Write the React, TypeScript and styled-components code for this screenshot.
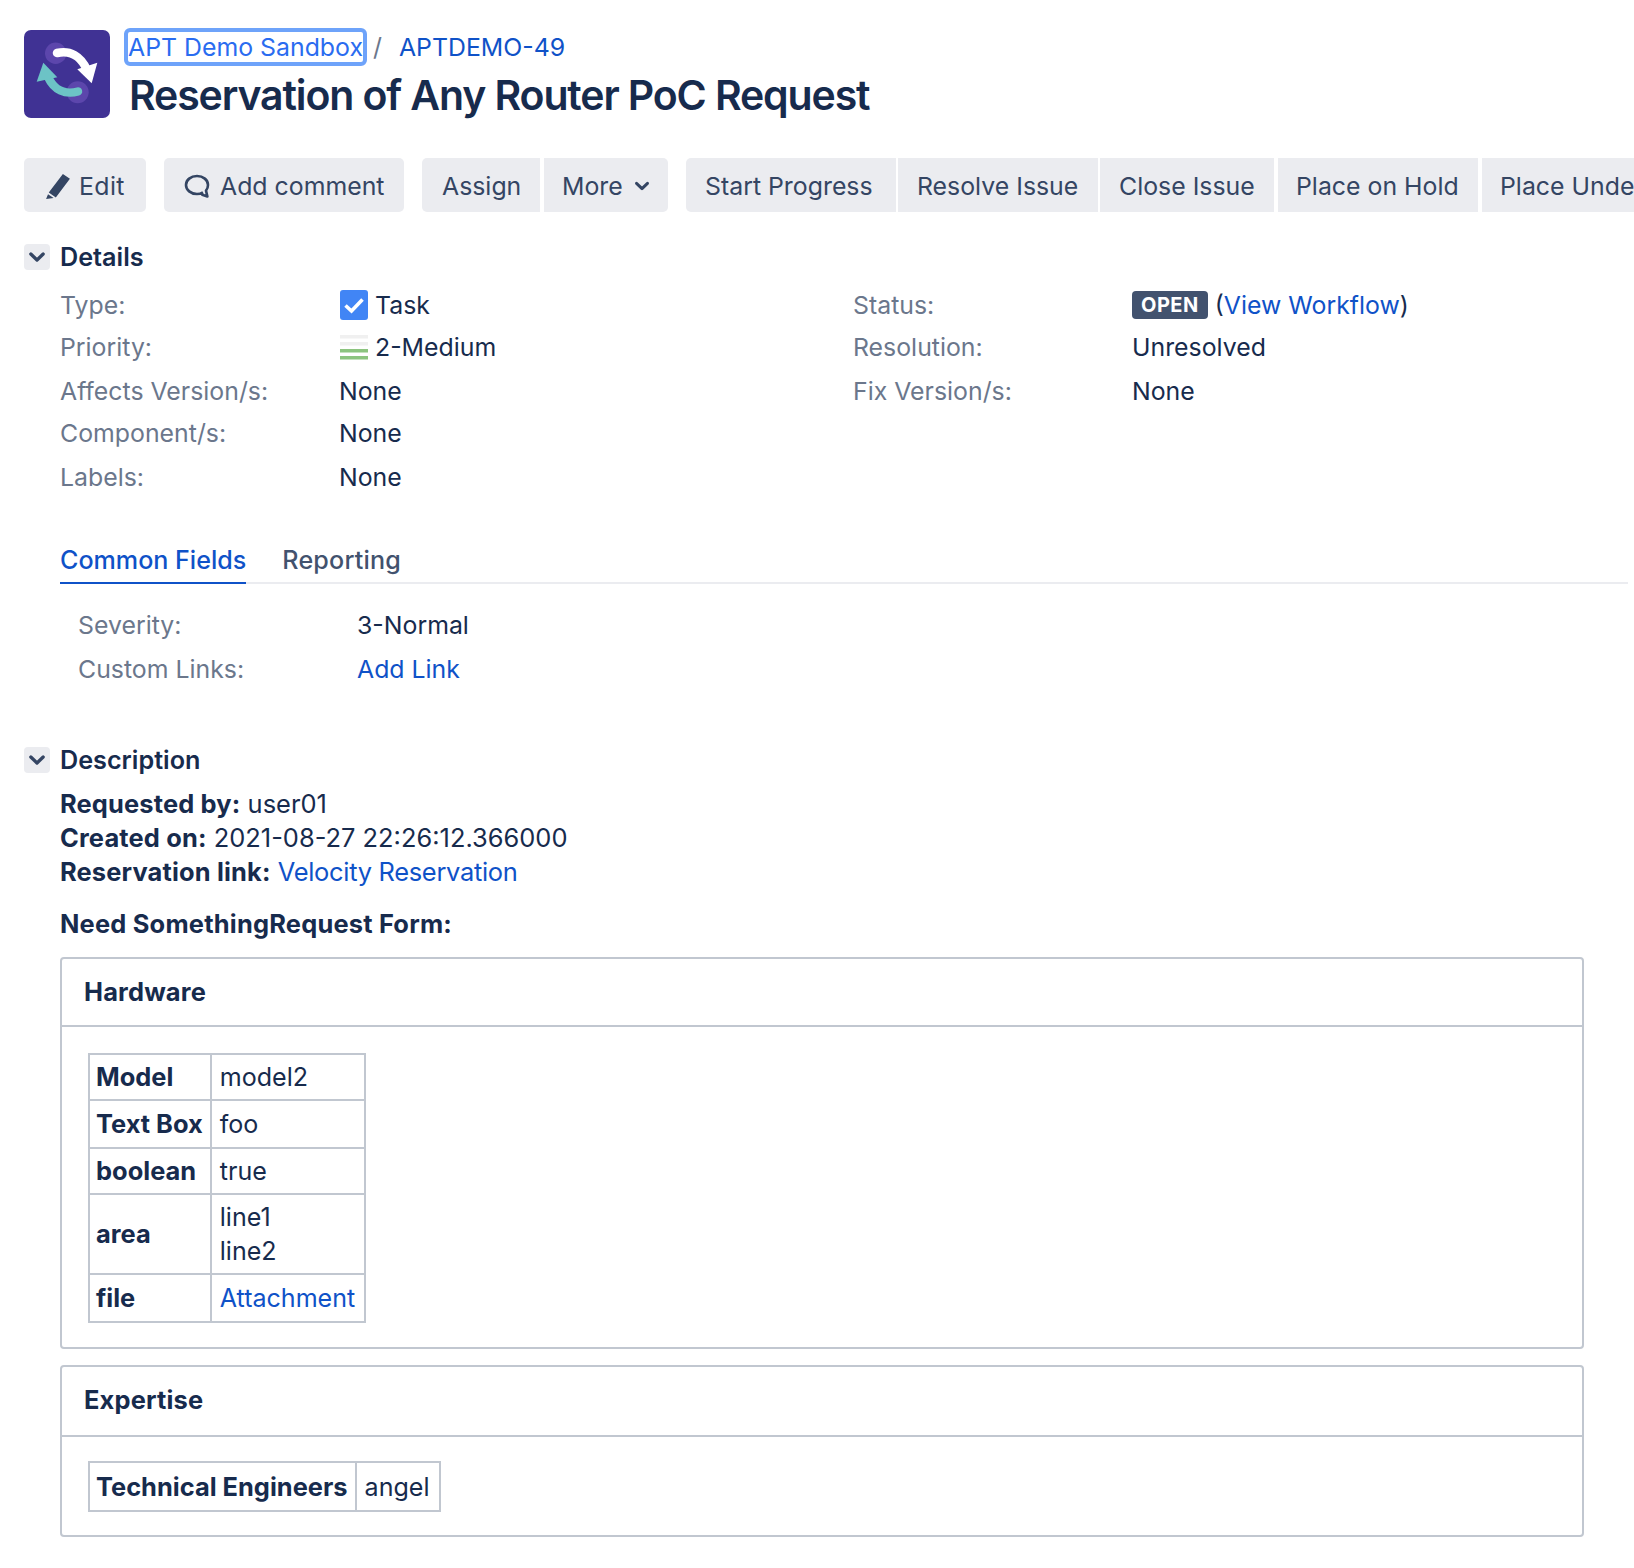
import React from 'react';
import styled, { createGlobalStyle } from 'styled-components';

const GlobalStyle = createGlobalStyle`
  html, body {
    margin: 0;
    padding: 0;
    background: #fff;
    overflow: hidden;
  }
  body {
    font-family: Inter, "Liberation Sans", sans-serif;
    font-size: 24.85px;
    line-height: 34px;
    color: #172b4d;
  }
`;

const Page = styled.div`
  width: 1634px;
  height: 1568px;
  overflow: hidden;
  padding: 28px 0 0 24px;
  box-sizing: border-box;
`;

const Header = styled.header`
  display: flex;
  gap: 15px;
  height: 130px;
`;

const Logo = styled.svg`
  width: 86px;
  height: 88px;
  margin-top: 2px;
  flex: none;
`;

const Titles = styled.div`
  display: flex;
  flex-direction: column;
`;

const Crumbs = styled.div`
  display: flex;
  align-items: center;
  height: 38px;
  color: #6b778c;
`;

const FocusLink = styled.a`
  color: #2a6cf0;
  border: 4px solid #6ea3fa;
  border-radius: 6px;
  height: 30px;
  line-height: 31px;
  margin: 0 6px 0 -1px;
`;

const Link = styled.a`
  color: #0f52c8;
`;

const CrumbLink = styled(Link)`
  margin-left: 17px;
`;

const VelocityLink = styled(Link)`
  letter-spacing: -0.3px;
`;

const Title = styled.h1`
  margin: -1px 0 0 4px;
  font-size: 41px;
  line-height: 60px;
  font-weight: 600;
  letter-spacing: -1.13px;
  white-space: nowrap;
`;

const Toolbar = styled.div`
  display: flex;
  gap: 18px;
  height: 54px;
  width: 1700px;
`;

const Group = styled.div<{ $gap?: number }>`
  display: flex;
  gap: ${(p) => p.$gap ?? 2}px;
`;

const Button = styled.button<{ $w: number; $gap?: number; $pad?: number }>`
  width: ${(p) => p.$w}px;
  flex: none;
  height: 54px;
  margin: 0 ${(p) => p.$gap ?? 0}px 0 0;
  border: none;
  border-radius: 0;
  background: #ebecf0;
  color: #344563;
  font: inherit;
  white-space: nowrap;
  display: flex;
  align-items: center;
  justify-content: flex-start;
  padding: 1px 0 0 ${(p) => p.$pad ?? 19}px;
  gap: 7px;
  overflow: hidden;

  &:first-child {
    border-top-left-radius: 5px;
    border-bottom-left-radius: 5px;
  }
  &:last-child {
    border-top-right-radius: 5px;
    border-bottom-right-radius: 5px;
  }
`;

const EditButton = styled(Button)`
  gap: 8px;
  letter-spacing: 0.4px;
`;

const CommentButton = styled(Button)`
  gap: 10px;
`;

const MoreCaret = styled.span`
  display: flex;
  margin-left: 4px;
`;

const Section = styled.section`
  margin-top: 32px;
`;

const SectionHead = styled.div`
  display: flex;
  align-items: center;
  gap: 10px;
  height: 26px;
  font-size: 25.2px;
  font-weight: 600;
`;

const Toggle = styled.span`
  width: 26px;
  height: 26px;
  background: #ebecf0;
  border-radius: 4px;
  display: flex;
  align-items: center;
  justify-content: center;
  flex: none;
`;

const Details = styled.div`
  display: grid;
  grid-template-columns: 793px 1fr;
  padding: 14px 0 0 36px;
`;

const FieldList = styled.div`
  display: flex;
  flex-direction: column;
`;

const Field = styled.div`
  display: grid;
  grid-template-columns: 279px 1fr;
  height: 42px;
  align-items: center;

  &:nth-child(odd):not(:first-child) {
    margin-top: 2px;
  }
`;

const Label = styled.span`
  color: #6b778c;
`;

const Value = styled.span`
  display: flex;
  align-items: center;
  gap: 7px;
  white-space: nowrap;
`;

const IconSvg = styled.svg`
  margin-left: 1px;
  flex: none;
`;

const Lozenge = styled.span`
  background: #42526e;
  color: #fff;
  font-size: 20px;
  font-weight: 700;
  line-height: 28px;
  height: 28px;
  padding: 0 9px;
  border-radius: 4px;
  letter-spacing: 0.5px;
`;

const Tabs = styled.div`
  display: flex;
  gap: 36px;
  margin: 34px 6px 0 36px;
  border-bottom: 2px solid #ebecf0;
  height: 50px;
`;

const Tab = styled.div<{ $active?: boolean }>`
  height: 50px;
  line-height: 56px;
  font-size: 25.1px;
  font-weight: 500;
  letter-spacing: ${(p) => (p.$active ? 0 : 0.2)}px;
  color: ${(p) => (p.$active ? '#0f52c8' : '#42526e')};
  border-bottom: 2px solid ${(p) => (p.$active ? '#0f52c8' : 'transparent')};
`;

const TabBody = styled(FieldList)`
  padding: 20px 0 0 54px;
`;

const TallField = styled(Field)`
  height: 46px;
`;

const DescSection = styled.section`
  margin-top: 55px;
`;

const DescBody = styled.div`
  padding: 14px 50px 0 36px;
  font-size: 25.45px;

  b {
    letter-spacing: 0.15px;
  }
`;

const Line = styled.div`
  height: 34px;
  white-space: nowrap;
`;

const FormTitle = styled(Line)`
  font-weight: 700;
  letter-spacing: 0.2px;
  margin: 18px 0 16px;
`;

const Panel = styled.div`
  border: 2px solid #c1c7d0;
  border-radius: 4px;
  margin-bottom: 16px;
`;

const PanelHead = styled.div<{ $h: number }>`
  height: ${(p) => p.$h}px;
  line-height: 66px;
  padding: 0 22px;
  font-weight: 700;
  letter-spacing: 0.15px;
  border-bottom: 2px solid #c1c7d0;
`;

const PanelBody = styled.div<{ $top: number; $bottom: number }>`
  padding: ${(p) => p.$top}px 26px ${(p) => p.$bottom}px;
`;

const Table = styled.table`
  border-collapse: collapse;
`;

const Row = styled.tr<{ $h: number }>`
  height: ${(p) => p.$h}px;
`;

const Th = styled.th`
  border: 2px solid #c1c7d0;
  font-weight: 700;
  text-align: left;
  padding: 0 7px 0 6px;
  white-space: nowrap;
`;

const Td = styled.td`
  border: 2px solid #c1c7d0;
  font-size: 25.05px;
  padding: 0 9px 0 8px;
  white-space: nowrap;
`;

const Chevron = ({ size = 18 }: { size?: number }) => (
  <svg width={size} height={size} viewBox="0 0 14 14" fill="none">
    <path d="M2.2 4.7 L7 9.3 L11.8 4.7" stroke="#344563" strokeWidth="2.6" strokeLinecap="round" strokeLinejoin="round" />
  </svg>
);

const rows: [string, string, number][] = [
  ['Model', 'model2', 46],
  ['Text Box', 'foo', 48],
  ['boolean', 'true', 46],
];

const App = () => (
  <Page>
    <GlobalStyle />
    <Header>
      <Logo viewBox="0 0 86 88">
        <rect width="86" height="88" rx="7" fill="#403294" />
        <circle cx="31.7" cy="23.3" r="10.7" fill="#5c46ac" />
        <circle cx="53.7" cy="62.3" r="11" fill="#5c46ac" />
        <path d="M33 23 C46 20 57 26 63 40" stroke="#fff" strokeWidth="8.5" strokeLinecap="round" fill="none" />
        <polygon points="53.3,39.3 73.3,32.7 67.7,53.3" fill="#fff" />
        <path d="M54 61.5 C41 65 30 60 24 47" stroke="#6cc3c6" strokeWidth="8.5" strokeLinecap="round" fill="none" />
        <polygon points="12.7,51.7 19.3,32.7 33.3,47.3" fill="#6cc3c6" />
      </Logo>
      <Titles>
        <Crumbs>
          <FocusLink>APT Demo Sandbox</FocusLink>/
          <CrumbLink>APTDEMO-49</CrumbLink>
        </Crumbs>
        <Title>Reservation of Any Router PoC Request</Title>
      </Titles>
    </Header>

    <Toolbar>
      <Group>
        <EditButton $w={122} $pad={21}>
          <svg width="26" height="26" viewBox="0 0 24 24">
            <path d="M16.5 1 L23 5.2 L10 22.5 L3.5 18 Z M2.8 19.5 L8 23 L1 24 Z" fill="#344563" />
          </svg>
          Edit
        </EditButton>
      </Group>
      <Group>
        <CommentButton $w={240} $pad={20}>
          <svg width="26" height="24" viewBox="0 0 26 24" fill="none">
            <path
              d="M19 18.3 C17.2 19.4 15.2 20 13 20 C6.8 20 2 16 2 11 C2 6 6.8 2 13 2 C19.2 2 24 6 24 11 C24 13.2 23.3 15 22 16.6 L23.4 22.5 L17.5 20.6"
              stroke="#344563"
              strokeWidth="2.6"
              strokeLinejoin="round"
            />
          </svg>
          Add comment
        </CommentButton>
      </Group>
      <Group $gap={4}>
        <Button $w={118} $pad={20}>Assign</Button>
        <Button $w={124} $pad={18}>
          More
          <MoreCaret>
            <Chevron size={16} />
          </MoreCaret>
        </Button>
      </Group>
      <Group>
        <Button $w={210}>Start Progress</Button>
        <Button $w={200}>Resolve Issue</Button>
        <Button $w={174} $gap={2} $pad={19}>Close Issue</Button>
        <Button $w={200} $gap={2} $pad={18}>Place on Hold</Button>
        <Button $w={260} $pad={18}>Place Under Review</Button>
      </Group>
    </Toolbar>

    <Section>
      <SectionHead>
        <Toggle>
          <Chevron />
        </Toggle>
        Details
      </SectionHead>
      <Details>
        <FieldList>
          <Field>
            <Label>Type:</Label>
            <Value>
              <IconSvg width="28" height="30" viewBox="0 0 28 30">
                <rect width="28" height="30" rx="3" fill="#4185f5" />
                <path d="M5.5 15.5 L11.5 21 L22.5 9.5" stroke="#fff" strokeWidth="3.6" fill="none" />
              </IconSvg>
              Task
            </Value>
          </Field>
          <Field>
            <Label>Priority:</Label>
            <Value>
              <IconSvg width="28" height="25" viewBox="0 0 28 25">
                <rect y="0" width="28" height="3.5" fill="#f0f0f0" />
                <rect y="7" width="28" height="3.5" fill="#f0f0f0" />
                <rect y="14" width="28" height="3.5" fill="#8cc47f" />
                <rect y="21" width="28" height="3.5" fill="#8cc47f" />
              </IconSvg>
              2-Medium
            </Value>
          </Field>
          <Field>
            <Label>Affects Version/s:</Label>
            <Value>None</Value>
          </Field>
          <Field>
            <Label>Component/s:</Label>
            <Value>None</Value>
          </Field>
          <Field>
            <Label>Labels:</Label>
            <Value>None</Value>
          </Field>
        </FieldList>
        <FieldList>
          <Field>
            <Label>Status:</Label>
            <Value>
              <Lozenge>OPEN</Lozenge>
              <span>
                (<Link>View Workflow</Link>)
              </span>
            </Value>
          </Field>
          <Field>
            <Label>Resolution:</Label>
            <Value>Unresolved</Value>
          </Field>
          <Field>
            <Label>Fix Version/s:</Label>
            <Value>None</Value>
          </Field>
        </FieldList>
      </Details>

      <Tabs>
        <Tab $active>Common Fields</Tab>
        <Tab>Reporting</Tab>
      </Tabs>
      <TabBody>
        <Field>
          <Label>Severity:</Label>
          <Value>3-Normal</Value>
        </Field>
        <TallField>
          <Label>Custom Links:</Label>
          <Value>
            <Link>Add Link</Link>
          </Value>
        </TallField>
      </TabBody>
    </Section>

    <DescSection>
      <SectionHead>
        <Toggle>
          <Chevron />
        </Toggle>
        Description
      </SectionHead>
      <DescBody>
        <Line>
          <b>Requested by:</b> user01
        </Line>
        <Line>
          <b>Created on:</b> 2021-08-27 22:26:12.366000
        </Line>
        <Line>
          <b>Reservation link:</b> <VelocityLink>Velocity Reservation</VelocityLink>
        </Line>
        <FormTitle>Need SomethingRequest Form:</FormTitle>
        <Panel>
          <PanelHead $h={66}>Hardware</PanelHead>
          <PanelBody $top={26} $bottom={24}>
            <Table>
              <tbody>
                {rows.map(([k, v, h]) => (
                  <Row key={k} $h={h}>
                    <Th>{k}</Th>
                    <Td>{v}</Td>
                  </Row>
                ))}
                <Row $h={80}>
                  <Th>area</Th>
                  <Td>
                    line1
                    <br />
                    line2
                  </Td>
                </Row>
                <Row $h={48}>
                  <Th>file</Th>
                  <Td>
                    <Link>Attachment</Link>
                  </Td>
                </Row>
              </tbody>
            </Table>
          </PanelBody>
        </Panel>
        <Panel>
          <PanelHead $h={68}>Expertise</PanelHead>
          <PanelBody $top={24} $bottom={23}>
            <Table>
              <tbody>
                <Row $h={49}>
                  <Th>Technical Engineers</Th>
                  <Td>angel</Td>
                </Row>
              </tbody>
            </Table>
          </PanelBody>
        </Panel>
      </DescBody>
    </DescSection>
  </Page>
);

export default App;
